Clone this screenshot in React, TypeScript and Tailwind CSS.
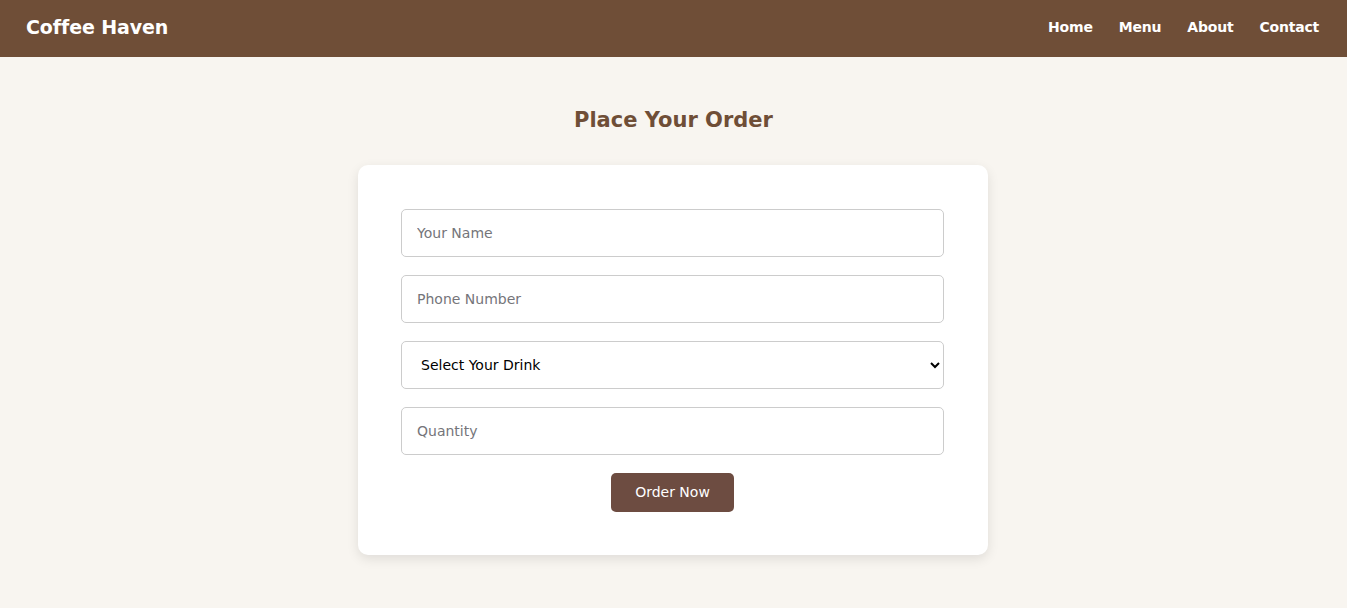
import { useState } from 'react';

export default function App() {
  const [drink, setDrink] = useState('');

  return (
    <div className="min-h-screen bg-[#f8f5f0] font-['DejaVu_Sans',sans-serif]">
      {/* Header */}
      <header className="h-[57px] bg-[#6f4e37] pl-[26px] pr-[28px] pb-[3px] flex items-center justify-between text-white">
        <h1 className="text-[19px] font-bold tracking-[-0.1px]">Coffee Haven</h1>
        <nav className="flex items-center gap-[26px] text-[14px] font-bold tracking-[-0.2px]">
          <a href="#">Home</a>
          <a href="#">Menu</a>
          <a href="#">About</a>
          <a href="#">Contact</a>
        </nav>
      </header>

      {/* Order */}
      <main className="flex flex-col items-center pt-[53px]">
        <h2 className="text-[21px] font-semibold text-[#6f4e37] leading-none">Place Your Order</h2>
        <form className="mt-[34px] mr-[1px] w-[630px] bg-white rounded-[10px] shadow-[0_4px_12px_rgba(0,0,0,0.1)] pl-[43px] pr-[44px] pt-[44px] pb-[43px] flex flex-col gap-[18px]">
          <input
            type="text"
            placeholder="Your Name"
            className="h-[48px] w-full border border-[#cccccc] rounded-[5px] px-[15px] text-[14px] placeholder:text-[#75757a] outline-none"
          />
          <input
            type="tel"
            placeholder="Phone Number"
            className="h-[48px] w-full border border-[#cccccc] rounded-[5px] px-[15px] text-[14px] placeholder:text-[#75757a] outline-none"
          />
          <select
            value={drink}
            onChange={(e) => setDrink(e.target.value)}
            className="h-[48px] w-full border border-[#cccccc] rounded-[5px] px-[15px] text-[14px] text-black bg-white outline-none"
          >
            <option value="">Select Your Drink</option>
            <option value="espresso">Espresso</option>
            <option value="latte">Latte</option>
            <option value="cappuccino">Cappuccino</option>
          </select>
          <input
            type="number"
            placeholder="Quantity"
            className="h-[48px] w-full border border-[#cccccc] rounded-[5px] px-[15px] text-[14px] placeholder:text-[#75757a] outline-none"
          />
          <button
            type="button"
            className="self-center h-[39px] w-[123px] bg-[#6d4c41] text-white rounded-[5px] text-[14px]"
          >
            Order Now
          </button>
        </form>
      </main>
    </div>
  );
}
